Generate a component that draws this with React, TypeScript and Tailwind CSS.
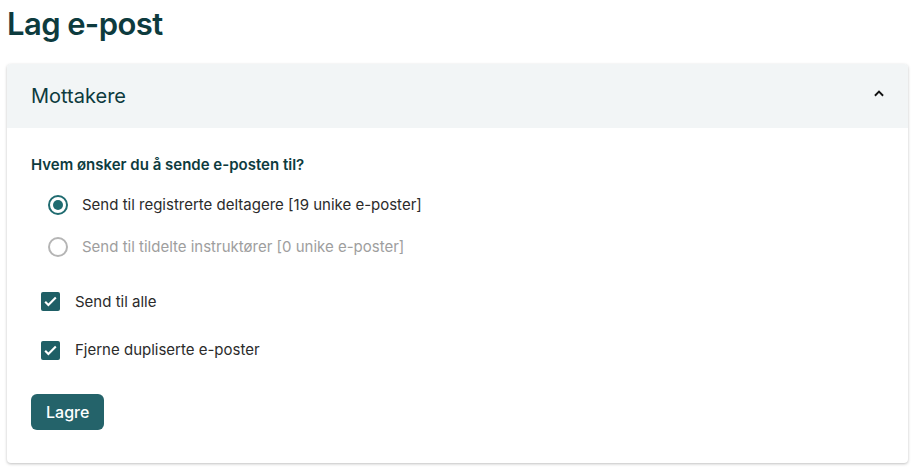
import React from "react";

export default function App() {
	const [recipient, setRecipient] = React.useState<string>("registered");
	const [sendAll, setSendAll] = React.useState<boolean>(true);
	const [dedupe, setDedupe] = React.useState<boolean>(true);
	const [open, setOpen] = React.useState<boolean>(true);

	return (
		<div className="min-h-screen w-full bg-white px-[7px] pt-[4px] font-['Inter',sans-serif]">
			<h1 className="text-[31px] font-semibold leading-[40px] tracking-[-0.6px] text-[#0d3b3e]">
				Lag e-post
			</h1>
			<div className="mt-[20px] w-[901px] rounded-[4px] bg-white shadow-[0_1px_3px_rgba(0,0,0,0.25)]">
				<button
					type="button"
					onClick={() => setOpen(!open)}
					className="flex h-[64px] w-full items-center justify-between rounded-t-[4px] bg-[#f2f5f6] pl-[24px] pr-[22px]"
				>
					<span className="text-[20px] font-normal text-[#0d3b3e]">Mottakere</span>
					<svg width="14" height="14" viewBox="0 0 24 24" className={open ? "-mt-[4px]" : "-mt-[4px] rotate-180"}>
						<path d="M5 15l7-7 7 7" fill="none" stroke="#111" strokeWidth="3.2" />
					</svg>
				</button>
				{open ? (
					<div className="px-[24px] pt-[26px] pb-[33px]">
						<p className="text-[15px] font-semibold text-[#0d3b3e]">
							Hvem ønsker du å sende e-posten til?
						</p>
						<div className="mt-[17px] flex flex-col gap-[20px] pl-[17px]">
							<label
								className="flex cursor-pointer items-center gap-[14px]"
								onClick={() => setRecipient("registered")}
							>
								<span className="flex h-[20px] w-[20px] items-center justify-center rounded-full border-2 border-[#1f6b70]">
									{recipient === "registered" ? (
										<span className="h-[10px] w-[10px] rounded-full bg-[#1f6b70]" />
									) : null}
								</span>
								<span className="text-[15px] text-[#2b2b2b]">
									Send til registrerte deltagere [19 unike e-poster]
								</span>
							</label>
							<label className="flex items-center gap-[14px]">
								<span className="h-[20px] w-[20px] rounded-full border-2 border-[#b5b5b5]" />
								<span className="text-[15px] text-[#9e9e9e]">
									Send til tildelte instruktører [0 unike e-poster]
								</span>
							</label>
						</div>
						<div className="mt-[32px] flex flex-col gap-[26px] pl-[10px]">
							<label
								className="flex cursor-pointer items-center gap-[15px]"
								onClick={() => setSendAll(!sendAll)}
							>
								<span className="flex h-[19px] w-[19px] items-center justify-center rounded-[2px] bg-[#1f5f66]">
									{sendAll ? (
										<svg width="17" height="17" viewBox="0 0 24 24">
											<path d="M4.5 12.5l4.5 4.5L19.5 6.5" fill="none" stroke="#fff" strokeWidth="3" />
										</svg>
									) : null}
								</span>
								<span className="text-[15px] text-[#2b2b2b]">Send til alle</span>
							</label>
							<label
								className="flex cursor-pointer items-center gap-[15px]"
								onClick={() => setDedupe(!dedupe)}
							>
								<span className="flex h-[19px] w-[19px] items-center justify-center rounded-[2px] bg-[#1f5f66]">
									{dedupe ? (
										<svg width="17" height="17" viewBox="0 0 24 24">
											<path d="M4.5 12.5l4.5 4.5L19.5 6.5" fill="none" stroke="#fff" strokeWidth="3" />
										</svg>
									) : null}
								</span>
								<span className="text-[15px] text-[#2b2b2b]">Fjerne dupliserte e-poster</span>
							</label>
						</div>
						<button
							type="button"
							className="mt-[32px] h-[36px] rounded-[6px] bg-[#24636a] px-[15px] text-[16px] font-medium text-white"
						>
							Lagre
						</button>
					</div>
				) : null}
			</div>
		</div>
	);
}
